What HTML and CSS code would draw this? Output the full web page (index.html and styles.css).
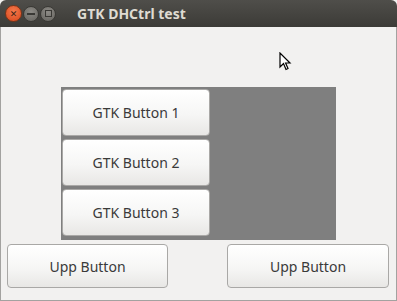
FILE: index.html
```html
<!DOCTYPE html>
<html lang="en">
<head>
    <meta charset="UTF-8">
    <title>GTK DHCtrl test</title>
    <link rel="stylesheet" href="styles.css">
</head>
<body>
    <div class="window">
        <div class="titlebar">
            <div class="controls">
                <span class="ctl close">&#x2715;</span>
                <span class="ctl min"><i class="bar"></i></span>
                <span class="ctl max"><i class="box"></i></span>
            </div>
            <div class="title">GTK DHCtrl test</div>
        </div>
        <div class="client">
            <div class="dhctrl">
                <button class="gtk-btn">GTK Button 1</button>
                <button class="gtk-btn">GTK Button 2</button>
                <button class="gtk-btn">GTK Button 3</button>
            </div>
            <div class="upp-row">
                <button class="upp-btn left">Upp Button</button>
                <button class="upp-btn right">Upp Button</button>
            </div>
        </div>
        <svg class="cursor" width="13" height="20" viewBox="0 0 13 20">
            <path d="M1 1 L1 15 L4.5 11.5 L7 17.5 L9 16.5 L6.6 11 L11 11 Z" fill="#fff" stroke="#000" stroke-width="1.2" stroke-linejoin="miter"/>
        </svg>
    </div>
</body>
</html>
```

FILE: styles.css
```css
* {
    box-sizing: border-box;
    margin: 0;
    padding: 0;
}

body {
    width: 397px;
    height: 301px;
    overflow: hidden;
    font-family: "Noto Sans", "DejaVu Sans", sans-serif;
    background-color: #f2f1f0;
}

.window {
    position: relative;
    width: 397px;
    height: 301px;
    display: flex;
    flex-direction: column;
}

.titlebar {
    height: 27px;
    display: flex;
    align-items: center;
    background: linear-gradient(#4f4e4a, #3c3b37);
    border-top-left-radius: 6px;
    border-top-right-radius: 6px;
}

.controls {
    display: flex;
    align-items: center;
    gap: 1px;
    padding-left: 5px;
    width: 77px;
}

.ctl {
    width: 17px;
    height: 17px;
    border-radius: 50%;
    display: flex;
    align-items: center;
    justify-content: center;
}

.close {
    background: radial-gradient(circle at 50% 35%, #f5794b, #d8471d);
    border: 1px solid #7a3418;
    color: #3c2418;
    font-size: 9px;
    font-weight: bold;
    line-height: 1;
}

.min, .max {
    width: 16px;
    height: 16px;
    background: radial-gradient(circle at 50% 35%, #8d8b86, #64625d);
    border: 1px solid #3a3935;
}

.bar {
    display: block;
    width: 8px;
    height: 2px;
    background-color: #3a3935;
}

.box {
    display: block;
    width: 7px;
    height: 7px;
    border: 1px solid #3a3935;
}

.title {
    color: #dfdbd2;
    font-size: 14px;
    font-weight: bold;
}

.client {
    flex: 1;
    padding-top: 60px;
    border-left: 1px solid #a3a2a0;
    border-right: 1px solid #a3a2a0;
    border-bottom: 1px solid #a3a2a0;
}

.dhctrl {
    margin-left: 60px;
    width: 275px;
    height: 153px;
    padding: 2px 1px;
    background-color: #7f7f7f;
    display: flex;
    flex-direction: column;
    gap: 3px;
}

button {
    font-family: "Noto Sans", "DejaVu Sans", sans-serif;
    font-size: 14px;
    color: #3a3a3a;
    border: 1px solid #a9a8a6;
    border-radius: 4px;
    background: linear-gradient(#ffffff, #f6f6f5 55%, #e8e7e5);
    box-shadow: inset 0 1px 0 #fff;
}

.gtk-btn {
    width: 148px;
    height: 47px;
}

.upp-row {
    display: flex;
    justify-content: space-between;
    padding: 4px 7px 0 6px;
}

.upp-btn {
    height: 44px;
}

.upp-btn.left {
    width: 161px;
}

.upp-btn.right {
    width: 162px;
}

.cursor {
    position: absolute;
    left: 279px;
    top: 52px;
}
```
